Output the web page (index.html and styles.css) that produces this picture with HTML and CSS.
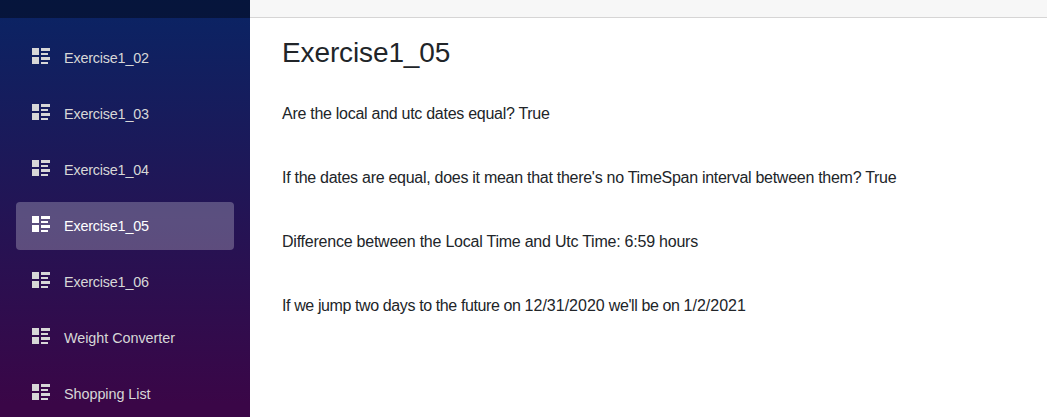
FILE: index.html
```html
<!DOCTYPE html>
<html lang="en">
<head>
<meta charset="utf-8">
<title>Exercise1_05</title>
<link rel="stylesheet" href="styles.css">
</head>
<body>
<svg class="defs" aria-hidden="true"><symbol id="list-rich" viewBox="0 0 18 18"><path d="M0 0h7v7H0zM9 0h9v3H9zM9 5h7v2H9zM0 9h7v7H0zM9 9h9v3H9zM9 14h7v2H9z"/></symbol></svg>
<div class="page">
<aside class="sidebar">
<div class="brand"></div>
<nav class="nav">
<a class="link"><svg class="icon"><use href="#list-rich"/></svg><span>Exercise1_02</span></a>
<a class="link"><svg class="icon"><use href="#list-rich"/></svg><span>Exercise1_03</span></a>
<a class="link"><svg class="icon"><use href="#list-rich"/></svg><span>Exercise1_04</span></a>
<a class="link active"><svg class="icon"><use href="#list-rich"/></svg><span>Exercise1_05</span></a>
<a class="link"><svg class="icon"><use href="#list-rich"/></svg><span>Exercise1_06</span></a>
<a class="link"><svg class="icon"><use href="#list-rich"/></svg><span class="wide">Weight Converter</span></a>
<a class="link"><svg class="icon"><use href="#list-rich"/></svg><span class="wide">Shopping List</span></a>
</nav>
</aside>
<main class="main">
<div class="top-row"></div>
<div class="content">
<h1>Exercise1_05</h1>
<p>Are the local and utc dates equal? True</p>
<p>If the dates are equal, does it mean that there's no TimeSpan interval between them? True</p>
<p class="difference">Difference between the Local Time and Utc Time: 6:59 hours</p>
<p class="future">If we jump two days to the future on <span class="date">12/31/2020</span> we'll be on <span class="date">1/2/2021</span></p>
</div>
</main>
</div>
</body>
</html>
```
FILE: styles.css
```css
* { box-sizing: border-box; }
body { margin: 0; font: 16px/24px "Liberation Sans", Arial, sans-serif; color: #212529; background: #fff; }
.defs { position: absolute; width: 0; height: 0; }
.page { display: flex; height: 417px; overflow: hidden; }
.sidebar { width: 250px; background: linear-gradient(180deg, #052767 -38px, #3a0647 403px); }
.brand { height: 18px; background: rgba(0,0,0,.4); }
.nav { display: flex; flex-direction: column; gap: 8px; padding: 16px; }
.link { display: flex; align-items: center; height: 48px; padding-left: 16px; border-radius: 4px; color: #d7d7d7; font-size: 14.4px; letter-spacing: -.2px; }
.wide { letter-spacing: -.05px; }
.active { background: rgba(255,255,255,.25); color: #fff; }
.icon { width: 18px; height: 18px; margin: -2px 14px 0 0; fill: currentColor; shape-rendering: crispEdges; }
.main { flex: 1; }
.top-row { height: 18px; background: #f7f7f7; border-bottom: 1px solid #d6d5d5; }
.content { padding: 18px 32px; }
h1 { margin: 0; font-size: 28px; line-height: 34px; font-weight: 400; letter-spacing: -.12px; }
p { margin: 0 0 40px; white-space: nowrap; letter-spacing: -.277px; }
.difference { letter-spacing: -.23px; }
.future { letter-spacing: -.39px; }
.date { letter-spacing: 0; }
h1 + p { margin-top: 32px; }
```
